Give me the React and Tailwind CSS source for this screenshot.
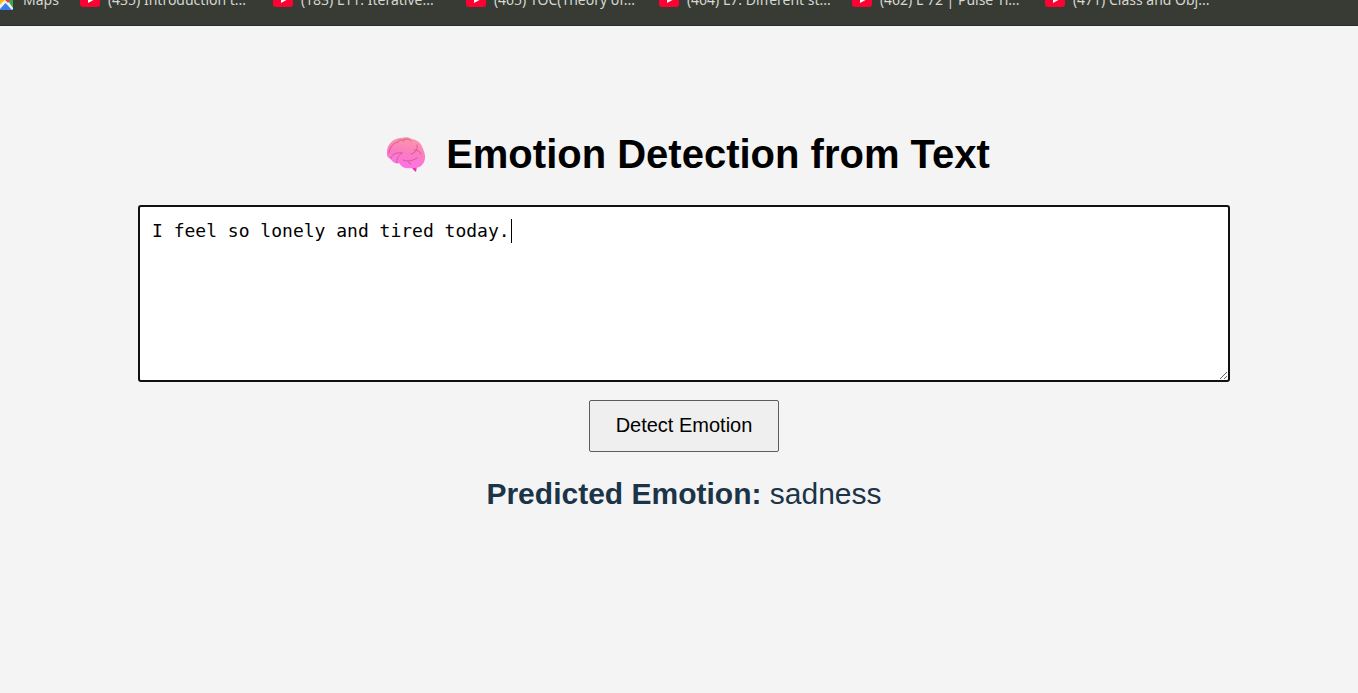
import { useState } from "react";

const bookmarks = [
  "(435) Introduction t...",
  "(183) L11. Iterative...",
  "(465) TOC(Theory of...",
  "(464) L7. Different st...",
  "(462) L 72 | Pulse Ti...",
  "(471) Class and Obj...",
];

function MapsIcon() {
  return (
    <svg viewBox="0 0 20 20" className="size-5 shrink-0" aria-hidden="true">
      <rect x="1" y="1" width="18" height="19" rx="1.5" fill="#f1f3f4" />
      <path d="M1 1h17v7l-5 2z" fill="#34a853" />
      <path d="M1 13 9 6l3 3-10 9z" fill="#fbbc04" />
      <path d="M5 20 11.5 13 18 20z" fill="#3b7ded" />
      <path d="M14 11 17 8h2v10z" fill="#34a853" />
      <path d="M10 8c0-4 2-6 4-6s4 2 4 5c0 2-3 4-4 6-1-2-4-3-4-5z" fill="#ea4335" />
    </svg>
  );
}

function VideoIcon() {
  return (
    <svg viewBox="0 0 20 14" className="h-3.5 w-5 shrink-0" aria-hidden="true">
      <rect width="20" height="14" rx="3" fill="#ff0033" />
      <path d="M8 4v6l5.5-3z" fill="#fff" />
    </svg>
  );
}

function BrainIcon() {
  return (
    <svg viewBox="0 0 40 36" className="h-9 w-10 shrink-0" aria-hidden="true">
      <defs>
        <linearGradient id="brain" x1="0.65" y1="0" x2="0.4" y2="1">
          <stop offset="0" stopColor="#fb9aa6" />
          <stop offset="0.5" stopColor="#fb7cc0" />
          <stop offset="1" stopColor="#ff70ee" />
        </linearGradient>
      </defs>
      <path d="M25 30c1 2 2 4 5 6l1-6z" fill="#e03aa6" />
      <path
        d="M1 18C0 9 7 2 15 2c4-1 8-1 11 1 6 1 10 5 11 10 3 6 3 13-2 17-3 2-6 2-9 2-5 1-10 0-13-5-4 1-7-1-8-4-3-1-4-2-4-5z"
        fill="url(#brain)"
      />
      <g fill="none" stroke="#d4508f" strokeWidth="1" strokeLinecap="round" opacity="0.85">
        <path d="M3 17c1-7 5-10 9-11M12 6c1-3 4-2 6-1M17 4c3-2 6-1 8 1" />
        <path d="M5 23c0-4 4-7 11-6M11 27c-1-4 1-7 5-10" />
        <path d="M31 9c1 4-1 8-6 9M28 14c3 0 6 1 7 4" />
        <path d="M17 24c3 1 8 2 14-2M22 26l3 2" />
      </g>
    </svg>
  );
}

export default function App() {
  const [text, setText] = useState("I feel so lonely and tired today.");

  return (
    <div className="min-h-screen bg-[#f4f4f4] font-['Liberation_Sans',Arial,sans-serif] text-black">
      <nav
        aria-label="Bookmarks"
        className="flex h-[26px] items-end overflow-hidden border-b border-[#2c2f28] bg-[#383b34] pb-[15px] font-['Noto_Sans',sans-serif] text-sm text-[#d5d7d1]"
      >
        <a href="#maps" className="-ml-1.5 mr-[21px] flex h-5 shrink-0 items-center gap-[9px] whitespace-nowrap">
          <MapsIcon />
          Maps
        </a>
        {bookmarks.map((title) => (
          <a
            key={title}
            href="#video"
            className="flex h-5 w-[193px] shrink-0 items-center gap-2 whitespace-nowrap"
          >
            <VideoIcon />
            {title}
          </a>
        ))}
      </nav>

      <main className="flex flex-col items-center pt-[104px] pr-32 pl-[138px]">
        <h1 className="flex items-center gap-5 pl-2 text-[40px] leading-12 font-bold">
          <BrainIcon />
          Emotion Detection from Text
        </h1>

        <div className="relative mt-[27px] w-full">
          <textarea
            aria-label="Text to analyse"
            value={text}
            onChange={(event) => setText(event.target.value)}
            spellCheck={false}
            className="block h-[177px] w-full resize-y rounded-[3px] border-2 border-[#101014] bg-white px-3 py-3 font-['DejaVu_Sans_Mono',monospace] text-lg leading-6 outline-none"
          />
          <span aria-hidden="true" className="pointer-events-none absolute top-3.5 left-[373px] h-6 w-px bg-black" />
        </div>

        <button
          type="button"
          className="mt-[18px] h-[52px] w-[190px] rounded-[2px] border border-[#5c5c5c] bg-[#efefef] pb-0.5 text-xl"
        >
          Detect Emotion
        </button>

        <p className="mt-6 text-3xl leading-9 text-[#1c3448]">
          <strong className="font-bold">Predicted Emotion:</strong> sadness
        </p>
      </main>
    </div>
  );
}
